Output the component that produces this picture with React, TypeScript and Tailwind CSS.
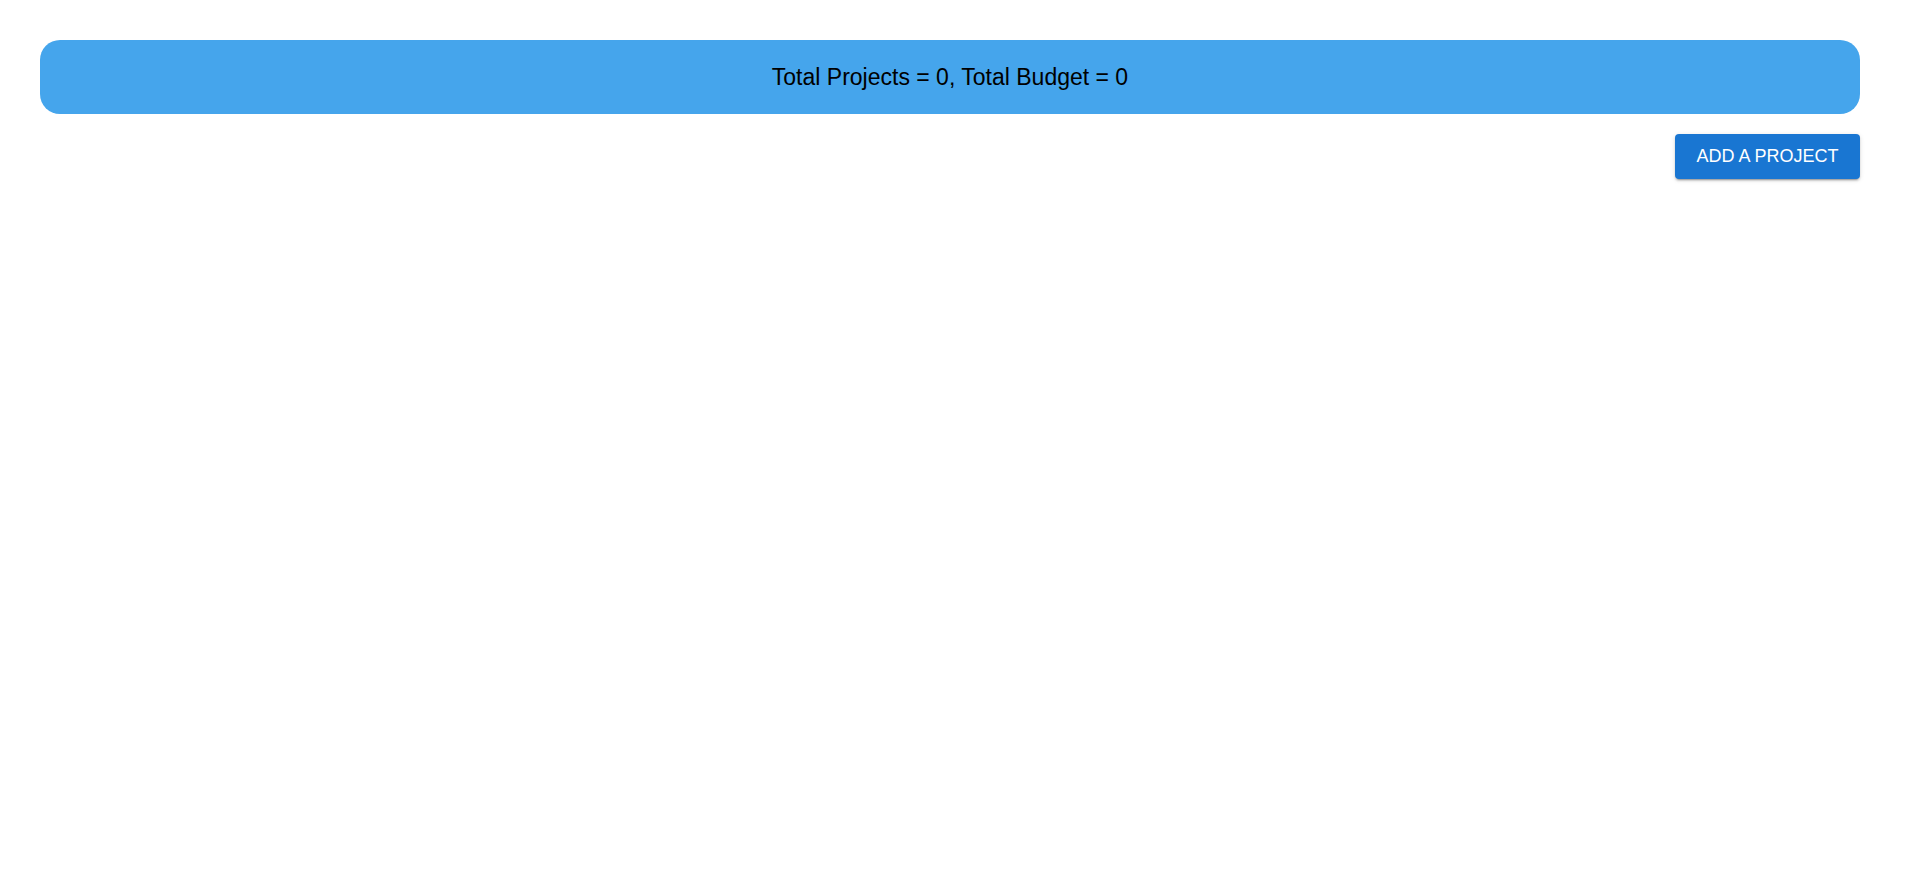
export default function App() {
  const totalProjects = 0;
  const totalBudget = 0;

  return (
    <div className="min-h-screen bg-white pb-10 pl-10 pr-[60px] pt-10 font-['Liberation_Sans',Arial,sans-serif]">
      <div className="flex h-[74px] items-center justify-center rounded-[20px] bg-[#45a5ec]">
        <p className="text-[23px] leading-none text-black">
          Total Projects = {totalProjects}, Total Budget = {totalBudget}
        </p>
      </div>
      <div className="mt-5 flex justify-end">
        <button
          type="button"
          className="h-[45px] w-[185px] rounded-[4px] bg-[#1976d2] text-[18px] uppercase text-white shadow-[0_3px_1px_-2px_rgba(0,0,0,0.2),0_2px_2px_0_rgba(0,0,0,0.14),0_1px_5px_0_rgba(0,0,0,0.12)]"
        >
          Add a Project
        </button>
      </div>
    </div>
  );
}
